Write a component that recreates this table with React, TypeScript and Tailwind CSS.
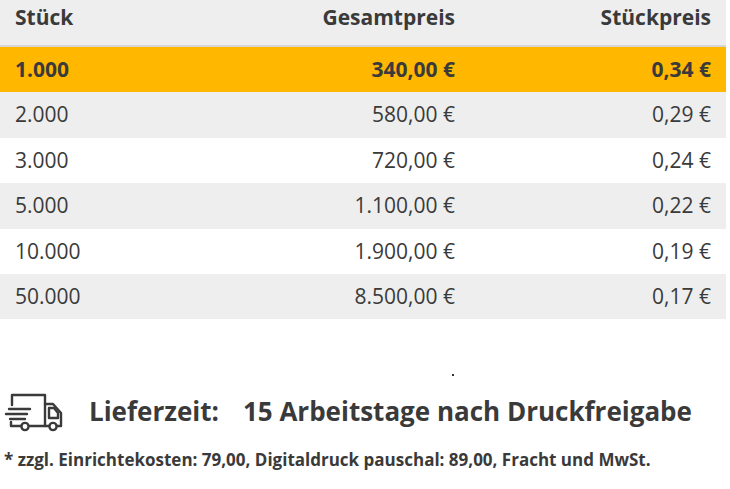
import React from "react";

const rows = [
  { q: "1.000", total: "340,00 €", unit: "0,34 €", hl: true },
  { q: "2.000", total: "580,00 €", unit: "0,29 €" },
  { q: "3.000", total: "720,00 €", unit: "0,24 €" },
  { q: "5.000", total: "1.100,00 €", unit: "0,22 €" },
  { q: "10.000", total: "1.900,00 €", unit: "0,19 €" },
  { q: "50.000", total: "8.500,00 €", unit: "0,17 €" },
];

function Truck() {
  return (
    <svg width="62" height="46" viewBox="0 0 62 46" fill="none" stroke="#3a3a3a" strokeWidth="2.4" strokeLinecap="round" strokeLinejoin="round">
      <path d="M9 17 V7 H42 V38" />
      <path d="M42 16 H50 L58 25 V38 H54" />
      <path d="M46 20 H51 L55 25 V30 H46 Z" />
      <path d="M27 38 H42 H46" />
      <circle cx="22" cy="38.5" r="3.6" />
      <circle cx="50" cy="38.5" r="3.6" />
      <path d="M6 21 H27" />
      <path d="M3 26 H24" />
      <path d="M7 31 H22" />
      <path d="M8 34 V38 H18" />
    </svg>
  );
}

export default function App() {
  return (
    <div className="w-[730px] h-[489px] bg-white text-[#3a3a3a] overflow-hidden" style={{ fontFamily: '"Open Sans", sans-serif' }}>
      <div className="w-[726px]">
        <div className="grid grid-cols-[200px_240px_1fr] h-[47px] pt-[2px] items-start bg-[#eeeeee] border-b-2 border-[#d6d6d6] px-[15px] text-[21px] font-bold">
          <div>Stück</div>
          <div className="text-right">Gesamtpreis</div>
          <div className="text-right">Stückpreis</div>
        </div>
        {rows.map((r, i) => (
          <div
            key={r.q}
            className={
              "grid grid-cols-[200px_240px_1fr] h-[45.4px] items-center px-[15px] text-[21px] " +
              (r.hl ? "bg-[#ffb700] font-bold" : i % 2 === 1 ? "bg-[#eeeeee]" : "bg-white")
            }
          >
            <div>{r.q}</div>
            <div className="text-right">{r.total}</div>
            <div className="text-right">{r.unit}</div>
          </div>
        ))}
      </div>
      <div className="relative h-[66px]">
        <div className="absolute left-[452px] top-[55px] w-[2px] h-[2px] bg-[#333]" />
      </div>
      <div className="flex items-center pl-[3px] h-[52px]">
        <Truck />
        <span className="ml-[24px] text-[26px] font-bold">Lieferzeit:</span>
        <span className="ml-[24px] text-[26px] font-bold">15 Arbeitstage nach Druckfreigabe</span>
      </div>
      <div className="pl-[4px] text-[17px] font-bold mt-[10px]">
        * zzgl. Einrichtekosten: 79,00, Digitaldruck pauschal: 89,00, Fracht und MwSt.
      </div>
    </div>
  );
}
